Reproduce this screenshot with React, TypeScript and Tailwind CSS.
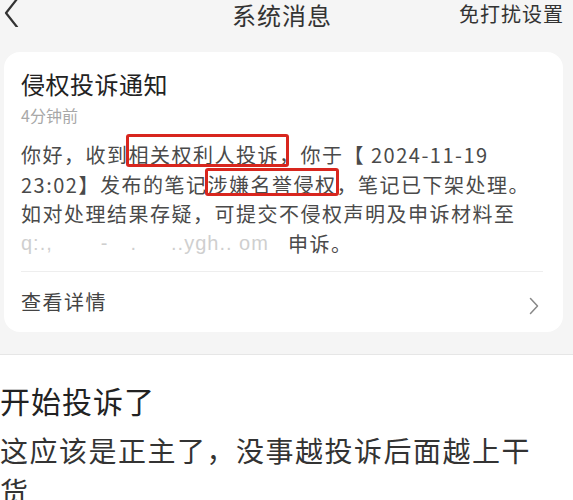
import React from "react";

const font = { fontFamily: '"Noto Sans CJK SC", "Noto Sans", sans-serif' };

const Marked = ({ children, box }: { children: React.ReactNode; box: string }) => (
  <span className="relative inline-block">
    {children}
    <span className={`absolute border-[3px] border-[#d8261e] rounded-[3px] ${box}`} />
  </span>
);

export default function App() {
  return (
    <div className="w-[573px] h-[500px] overflow-hidden bg-white" style={font}>
      {/* top gray area */}
      <div className="bg-[#f5f5f5] border-b border-[#e6e6e6] pb-[22px]">
        <div className="h-[52px] flex items-start">
          <svg width="16" height="30" viewBox="0 0 16 30" className="ml-[3px] mt-[-3px]">
            <path d="M14 2 L3 16 L14 30" fill="none" stroke="#333" strokeWidth="2.2" strokeLinecap="round" strokeLinejoin="round" />
          </svg>
          <div className="ml-[213px] mt-[2px] text-[24px] leading-[26px] tracking-[1px] text-[#333]">系统消息</div>
          <div className="ml-auto mr-[9px] mt-[2px] text-[20px] leading-[24px] tracking-[1px] text-[#333]">免打扰设置</div>
        </div>

        <div className="ml-[4px] w-[559px] rounded-[16px] bg-white pl-[17px] pr-[20px] pt-[17px] pb-[15px]">
          <div className="text-[24px] leading-[30px] tracking-[0.5px] text-[#222]">侵权投诉通知</div>
          <div className="mt-[5px] text-[16px] leading-[22px] text-[#a8a8a8]">4分钟前</div>

          <div className="mt-[14px] text-[20px] leading-[29.5px] tracking-[1.5px] text-[#4a4a4a]">
            <div className="whitespace-nowrap">
              你好，收到
              <Marked box="-left-[3px] -right-[10px] -top-[6px] bottom-[3px]">相关权利人投诉</Marked>
              ，你于【 2024-11-19
            </div>
            <div className="whitespace-nowrap">
              23:02】发布的笔记
              <Marked box="-left-[2px] -right-[3px] -top-[2px] bottom-[3px]">涉嫌名誉侵权</Marked>
              ，笔记已下架处理。
            </div>
            <div className="whitespace-nowrap">如对处理结果存疑，可提交不侵权声明及申诉材料至</div>
            <div className="flex whitespace-nowrap">
              <span className="w-[264px] shrink-0 font-['Liberation_Sans'] text-[#cfcfcf] tracking-[1px]">
                q:.,<span className="ml-[48px]">-</span><span className="ml-[22px]">.</span>
                <span className="ml-[34px]">..ygh.. om</span>
              </span>
              <span className="ml-[3px]">申诉。</span>
            </div>
          </div>

          <div className="mt-[13px] h-px w-[522px] bg-[#eeeeee]" />

          <div className="mt-[15px] flex items-center">
            <span className="text-[20px] leading-[30px] tracking-[1.5px] text-[#444]">查看详情</span>
            <svg width="10" height="18" viewBox="0 0 10 18" className="ml-auto mr-[4px] mt-[8px]">
              <path d="M1.5 1.5 L8.5 9 L1.5 16.5" fill="none" stroke="#888" strokeWidth="1.5" strokeLinecap="round" strokeLinejoin="round" />
            </svg>
          </div>
        </div>
      </div>

      {/* post content */}
      <div className="pt-[27px]">
        <div className="text-[30px] leading-[36px] tracking-[1px] text-[#222]">开始投诉了</div>
        <div className="mt-[12px] w-[560px] text-[28px] leading-[41px] tracking-[1.5px] text-[#333]">
          这应该是正主了，没事越投诉后面越上干货
        </div>
      </div>
    </div>
  );
}
